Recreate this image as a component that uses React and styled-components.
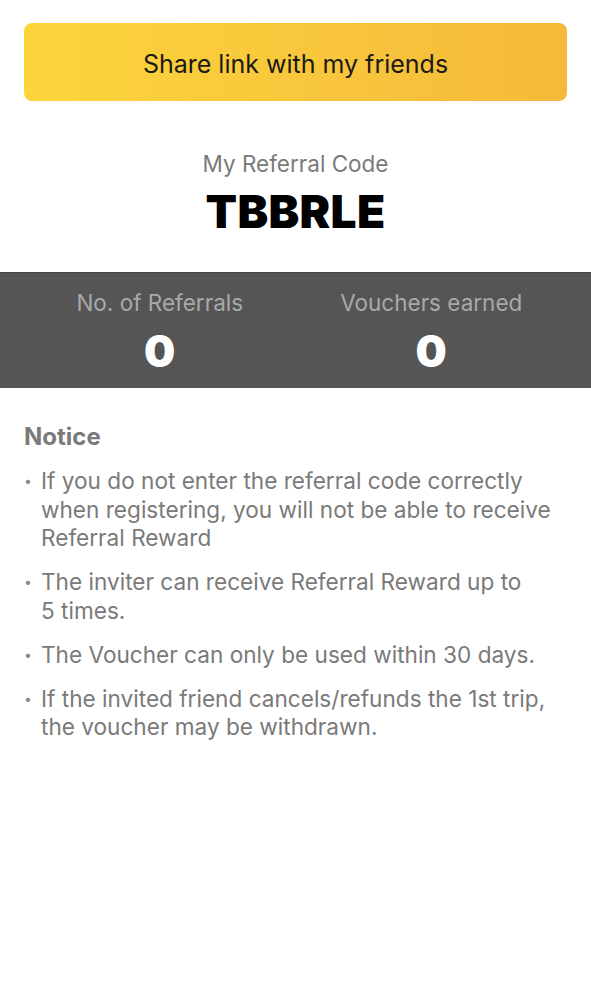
import React from 'react';
import styled, { createGlobalStyle } from 'styled-components';

const GlobalStyle = createGlobalStyle`
  html, body {
    margin: 0;
    padding: 0;
    background: #fff;
  }
  body {
    font-family: Inter, "Noto Sans", sans-serif;
    -webkit-font-smoothing: antialiased;
  }
`

const Page = styled.div`
  width: 591px;
  min-height: 986px;
  background: #fff;
`

const Top = styled.div`
  padding: 23px 24px 0;
`

const ShareButton = styled.button`
  width: 100%;
  height: 78px;
  padding: 4px 0 0;
  border: none;
  border-radius: 8px;
  background: linear-gradient(90deg, #fcd53b 0%, #f8c63c 55%, #f5b93a 100%);
  font-family: Inter, sans-serif;
  font-size: 25px;
  color: #1c1a14;
  cursor: pointer;
`

const CodeBlock = styled.div`
  display: flex;
  flex-direction: column;
  align-items: center;
  padding: 49px 0 35px;
`

const CodeLabel = styled.div`
  font-size: 22.5px;
  color: #7a7a7a;
  line-height: 28px;
`

const Code = styled.div`
  margin-top: 7px;
  font-size: 46px;
  font-weight: 900;
  letter-spacing: 0.3px;
  color: #000;
  line-height: 52px;
`

const Stats = styled.div`
  display: grid;
  grid-template-columns: 1fr 1fr;
  padding: 15px 24px 11px;
  background: #555;
  border-top: 1px solid #444;
`

const Stat = styled.div`
  display: flex;
  flex-direction: column;
  align-items: center;
`

const StatLabel = styled.div`
  font-size: 22.5px;
  line-height: 30px;
  color: #a9a9a9;
`

const StatValue = styled.div`
  margin-top: 7px;
  font-size: 44px;
  font-weight: 900;
  line-height: 52px;
  color: #fff;
`

const Notice = styled.div`
  padding: 33px 24px 0;
`

const NoticeTitle = styled.div`
  font-size: 24px;
  font-weight: 700;
  color: #7a7a7a;
  line-height: 32px;
`

const List = styled.ul`
  list-style: none;
  margin: 14px 0 0;
  padding: 0;
  display: flex;
  flex-direction: column;
  gap: 15.5px;
`

const Item = styled.li`
  display: flex;
  font-size: 22.6px;
  line-height: 28.5px;
  color: #7a7a7a;

  &::before {
    content: '•';
    flex: 0 0 17px;
    font-size: 14px;
    color: #8a8a8a;
  }
`

const notices = [
  'If you do not enter the referral code correctly when registering, you will not be able to receive Referral Reward',
  'The inviter can receive Referral Reward up to 5\u00a0times.',
  'The Voucher can only be used within 30 days.',
  'If the invited friend cancels/refunds the 1st trip, the voucher may be withdrawn.',
]

const App = () => {
  return (
    <Page>
      <GlobalStyle />
      <Top>
        <ShareButton>Share link with my friends</ShareButton>
      </Top>

      <CodeBlock>
        <CodeLabel>My Referral Code</CodeLabel>
        <Code>TBBRLE</Code>
      </CodeBlock>

      <Stats>
        <Stat>
          <StatLabel>No. of Referrals</StatLabel>
          <StatValue>0</StatValue>
        </Stat>
        <Stat>
          <StatLabel>Vouchers earned</StatLabel>
          <StatValue>0</StatValue>
        </Stat>
      </Stats>

      <Notice>
        <NoticeTitle>Notice</NoticeTitle>
        <List>
          {notices.map((text, i) => (
            <Item key={i}>{text}</Item>
          ))}
        </List>
      </Notice>
    </Page>
  );
}

export default App;
